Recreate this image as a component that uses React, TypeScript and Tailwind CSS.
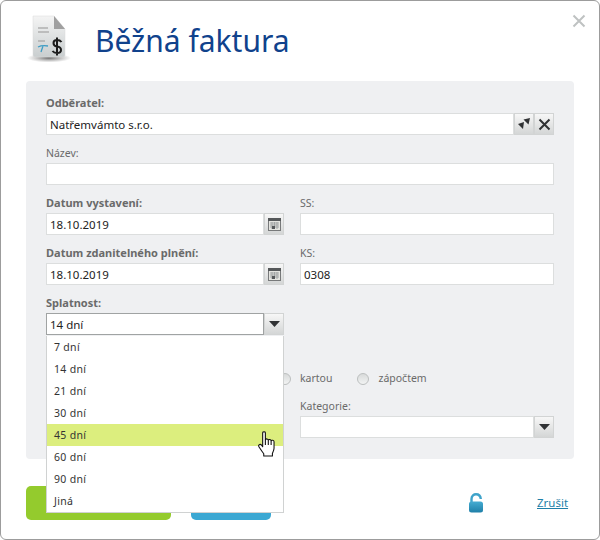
import type { ReactNode } from 'react';

const options = ['7 dní', '14 dní', '21 dní', '30 dní', '45 dní', '60 dní', '90 dní', 'Jiná'];

function InvoiceIcon() {
  return (
    <svg width="44" height="54" viewBox="0 0 44 54" className="shrink-0">
      <defs>
        <linearGradient id="sheet" x1="0" y1="0" x2="0" y2="1">
          <stop offset="0" stopColor="#f4f4f4" />
          <stop offset="1" stopColor="#c9cecf" />
        </linearGradient>
        <radialGradient id="shade">
          <stop offset="0" stopColor="#555" stopOpacity="0.85" />
          <stop offset="1" stopColor="#777" stopOpacity="0" />
        </radialGradient>
      </defs>
      <ellipse cx="22" cy="47" rx="22" ry="4.5" fill="url(#shade)" />
      <path d="M6 5 H27 L38 18 V44 Q38 46 36 46 H8 Q6 46 6 44 Z" fill="url(#sheet)" stroke="#d9d9d9" strokeWidth="0.5" />
      <path d="M27 5 L38 18 H27 Z" fill="#a0a0a0" />
      <path d="M11 17 H21 M11 21 H22" stroke="#b0b0b0" strokeWidth="1.6" />
      <path d="M11 30 H18" stroke="#aeaeae" strokeWidth="1.4" />
      <path d="M11 36 Q15 34 21 35 M16 35 L14 41" stroke="#3f9dc4" strokeWidth="1.3" fill="none" />
      <path d="M34.5 31 Q33 29 30 29 Q26.5 29 26.5 32 Q26.5 35 30 35.5 Q34 36 34 39 Q34 42 30 42 Q27 42 25.5 40 M30 26.5 V44.5" stroke="#1c1c1c" strokeWidth="2" fill="none" />
    </svg>
  );
}

function IconButton({ children }: { children: ReactNode }) {
  return (
    <div className="flex h-[22px] w-[20px] shrink-0 items-center justify-center border border-[#d2d4d4] bg-gradient-to-b from-[#f7f7f7] to-[#d4d6d6]">
      {children}
    </div>
  );
}

function CalendarIcon() {
  return (
    <svg width="13" height="13" viewBox="0 0 13 13">
      <rect x="0.5" y="0.5" width="12" height="12" fill="#e4e4e0" stroke="#77797a" />
      <rect x="0" y="0" width="13" height="3" fill="#55585a" />
      <path d="M2 5 H11 M2 7 H11 M2 9 H11 M4 4 V11 M6.5 4 V11 M9 4 V11" stroke="#a2a5a5" strokeWidth="1" />
      <rect x="4" y="8" width="3" height="3" fill="#55585a" />
    </svg>
  );
}

function Caret() {
  return (
    <svg width="11" height="6" viewBox="0 0 11 6">
      <path d="M0 0 H11 L5.5 6 Z" fill="#303234" />
    </svg>
  );
}

function Label({ children, bold }: { children: ReactNode; bold?: boolean }) {
  return (
    <div className={`h-[17px] leading-[14px] text-[#6a6a6a] ${bold ? 'text-[11px] font-bold' : 'text-[10.5px]'}`}>{children}</div>
  );
}

function Field({ value, button }: { value?: string; button?: ReactNode }) {
  return (
    <div className="flex h-[22px]">
      <div className="flex-1 border border-[#dcdede] bg-white pl-[3px] text-[11.5px] leading-[21px] text-[#222]">{value}</div>
      {button}
    </div>
  );
}

function Radio({ label }: { label: string }) {
  return (
    <div className="flex items-center gap-[9px]">
      <div className="size-[12px] rounded-full border border-[#bcbfbf] bg-gradient-to-b from-[#d8dada] to-[#f2f3f3]" />
      <span className="text-[10.5px] text-[#6a6a6a]">{label}</span>
    </div>
  );
}

function HandCursor() {
  return (
    <svg width="20" height="26" viewBox="0 0 18 24" className="absolute left-[256px] top-[430px] z-20">
      <path
        d="M5 1.5 C5 .5 7.5 .5 7.5 1.5 V8 C8 7 10 7 10.2 8.5 C10.6 7.4 12.6 7.6 12.8 9 C13.2 8.2 15.5 8.4 15.5 10 V16 C15.5 18 14.5 19.5 14 20.5 V23 H6 V21 C4.5 19 3.5 17.5 1.5 14.5 C.5 13 2.5 11.5 4 13 L5 14.5 Z"
        fill="#fff"
        stroke="#111"
        strokeWidth="1"
        strokeLinejoin="round"
      />
      <path d="M7.5 8 V13 M10.2 8.5 V13 M12.8 9 V13" stroke="#111" strokeWidth="1" fill="none" />
    </svg>
  );
}

export default function App() {
  return (
    <div className="relative h-[540px] w-[600px] overflow-hidden rounded-[6px] border border-[#9c9c9c] bg-white font-['Noto_Sans',sans-serif]">
      <svg width="14" height="14" viewBox="0 0 14 14" className="absolute left-[571px] top-[13px]">
        <path d="M1.5 1.5 L12.5 12.5 M12.5 1.5 L1.5 12.5" stroke="#bfc2c2" strokeWidth="2" />
      </svg>

      <header className="flex h-[80px] items-start pl-[26px] pt-[10px]">
        <InvoiceIcon />
        <h1 className="ml-[24px] mt-[8px] text-[30px] leading-[44px] text-[#10428c]">Běžná faktura</h1>
      </header>

      <main className="mx-[25px] flex h-[378px] flex-col rounded-[4px] bg-[#eff0f2] px-[20px] pt-[15px]">
        <Label bold>Odběratel:</Label>
        <Field
          value="Natřemvámto s.r.o."
          button={
            <>
              <IconButton>
                <svg width="14" height="14" viewBox="0 0 14 14">
                  <path d="M1 7 L7 5 L6 12 Z M6.5 2.5 L13 1 L11.5 7.5 Z" fill="#303234" />
                </svg>
              </IconButton>
              <IconButton>
                <svg width="13" height="13" viewBox="0 0 13 13">
                  <path d="M1.5 1.5 L11.5 11.5 M11.5 1.5 L1.5 11.5" stroke="#303234" strokeWidth="2" />
                </svg>
              </IconButton>
            </>
          }
        />
        <div className="mt-[11px]">
          <Label>Název:</Label>
          <Field />
        </div>

        <div className="mt-[11px] grid grid-cols-[238px_254px] gap-x-[16px] gap-y-[11px]">
          <div>
            <Label bold>Datum vystavení:</Label>
            <Field value="18.10.2019" button={<IconButton><CalendarIcon /></IconButton>} />
          </div>
          <div>
            <Label>SS:</Label>
            <Field />
          </div>
          <div>
            <Label bold>Datum zdanitelného plnění:</Label>
            <Field value="18.10.2019" button={<IconButton><CalendarIcon /></IconButton>} />
          </div>
          <div>
            <Label>KS:</Label>
            <Field value="0308" />
          </div>
          <div className="relative">
            <Label bold>Splatnost:</Label>
            <div className="flex h-[22px]">
              <div className="flex-1 border border-[#a0a3a3] bg-white pl-[3px] text-[11.5px] leading-[21px] text-[#222]">14 dní</div>
              <IconButton><Caret /></IconButton>
            </div>
            {/* otevřený seznam */}
            <ul className="absolute left-0 top-[40px] z-10 w-[238px] border border-[#d0d2d2] border-t-0 bg-white">
              {options.map((o) => (
                <li
                  key={o}
                  className={`h-[22px] pl-[7px] text-[10.5px] leading-[22px] tracking-[0.3px] text-[#333] ${o === '45 dní' ? 'bg-[#dcee7e]' : ''}`}
                >
                  {o}
                </li>
              ))}
            </ul>
          </div>
        </div>

        <div className="ml-[233px] mt-[35px] flex h-[18px] items-center gap-[25px]">
          <Radio label="kartou" />
          <Radio label="zápočtem" />
        </div>

        <div className="ml-[254px] mt-[11px] w-[254px]">
          <Label>Kategorie:</Label>
          <Field button={<IconButton><Caret /></IconButton>} />
        </div>
      </main>

      <footer className="mx-[25px] mt-[27px] flex h-[34px] items-start">
        <div className="h-[34px] w-[145px] shrink-0 rounded-[5px] bg-[#94cb2d]" />
        <div className="ml-[20px] h-[34px] w-[80px] shrink-0 rounded-[5px] bg-[#3ba8d3]" />
        <svg width="16" height="20" viewBox="0 0 16 20" className="ml-[197px] mt-[7px] shrink-0">
          <defs>
            <linearGradient id="lock" x1="0" y1="0" x2="0" y2="1">
              <stop offset="0" stopColor="#45acd2" />
              <stop offset="1" stopColor="#1f7fa8" />
            </linearGradient>
          </defs>
          <path d="M3.5 10 V6 C3.5 2.5 6 1.2 8 1.2 C10.5 1.2 12.5 2.8 12.8 6" stroke="#3fa3ca" strokeWidth="2.4" fill="none" />
          <rect x="1" y="8.5" width="14" height="11" rx="2.5" fill="url(#lock)" />
        </svg>
        <a className="ml-[53px] mt-[8px] text-[11.5px] leading-[17px] text-[#1e7fa8] underline">Zrušit</a>
      </footer>

      <HandCursor />
    </div>
  );
}
